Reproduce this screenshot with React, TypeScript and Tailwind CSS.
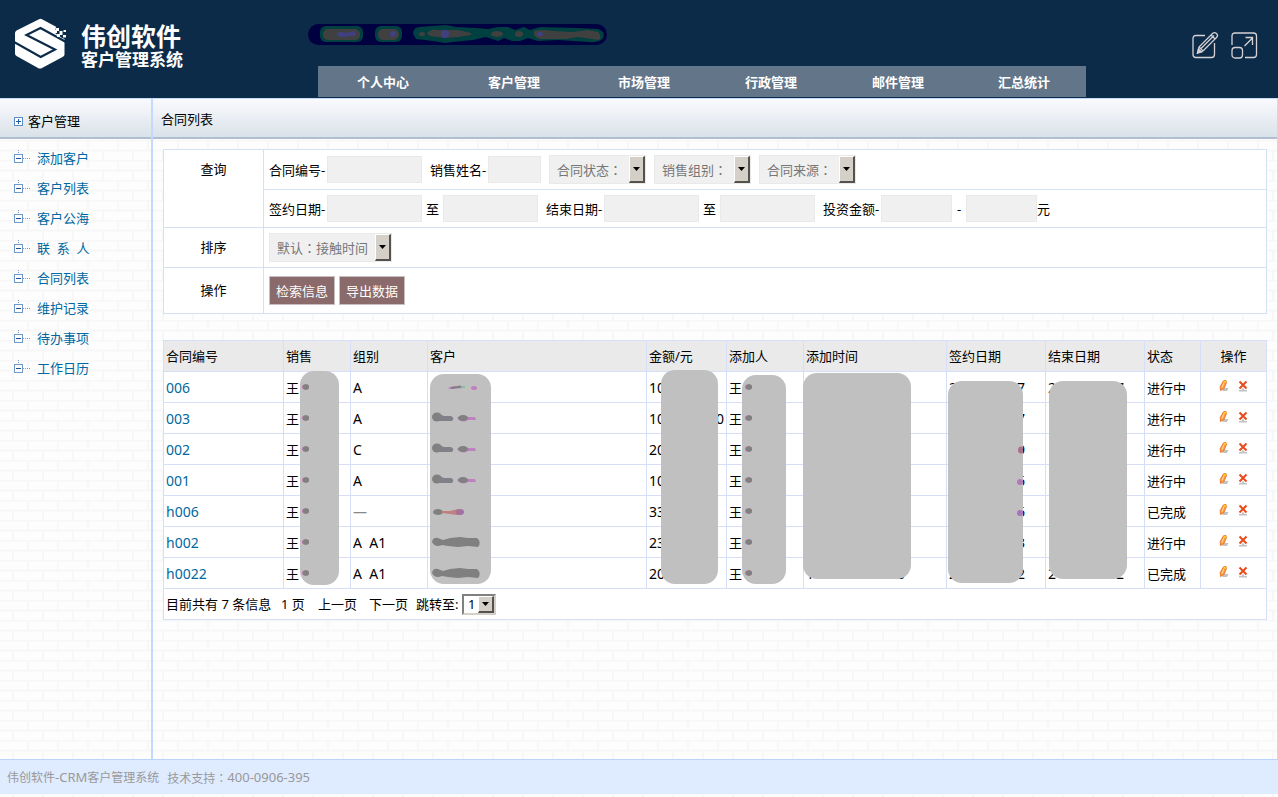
import type { ReactNode } from "react";

const NAV_ITEMS = ["个人中心", "客户管理", "市场管理", "行政管理", "邮件管理", "汇总统计"];

const SIDE_ITEMS = [
  "添加客户",
  "客户列表",
  "客户公海",
  "联  系  人",
  "合同列表",
  "维护记录",
  "待办事项",
  "工作日历",
];

// Masked values only keep their first and last characters
type Masked = [string, string];

interface Contract {
  code: string;
  group: string;
  amount: Masked;
  added: Masked;
  signed: Masked;
  ended: Masked;
  status: string;
}

const CONTRACTS: Contract[] = [
  { code: "006", group: "A", amount: ["10", ""], added: ["", ""], signed: ["2", "7"], ended: ["2", "7"], status: "进行中" },
  { code: "003", group: "A", amount: ["10", "0"], added: ["", ""], signed: ["", "7"], ended: ["", ""], status: "进行中" },
  { code: "002", group: "C", amount: ["20", ""], added: ["", ""], signed: ["", "9"], ended: ["", ""], status: "进行中" },
  { code: "001", group: "A", amount: ["10", ""], added: ["", ""], signed: ["", "6"], ended: ["", ""], status: "进行中" },
  { code: "h006", group: "", amount: ["33", ""], added: ["", ""], signed: ["", "6"], ended: ["", ""], status: "已完成" },
  { code: "h002", group: "A  A1", amount: ["23", ""], added: ["", ""], signed: ["", "3"], ended: ["", ""], status: "进行中" },
  { code: "h0022", group: "A  A1", amount: ["20", ""], added: ["1", "0"], signed: ["2", "2"], ended: ["2", "2"], status: "已完成" },
];

export default function App() {
  return (
    <div className="relative isolate flex min-h-screen flex-col bg-[#fdfdfd] font-['Noto_Sans','Noto_Sans_CJK_SC',sans-serif] text-[13px] leading-5 text-black">
      <BrickBackground />
      <Header />

      <div className="flex flex-1 border-t border-[#c3dafb]">
        <Sidebar />
        <main className="min-w-0 flex-1 border-r border-[#c3dafb]">
          <h1 className="flex h-10 items-center border-b-2 border-[#afbfcf] bg-linear-to-b from-[#fafafe] to-[#dae2e9] px-2 pt-0.5">
            合同列表
          </h1>
          <div className="p-[10px]">
            <SearchForm />
            <ContractTable />
          </div>
        </main>
      </div>

      <footer className="mb-[3px] flex h-[35px] items-center border-t border-[#b9d4fa] bg-[#dfebff] px-[7px] pt-px text-xs text-[#999]">
        <span>伟创软件</span>
        <span className="text-[13px]">-CRM</span>
        <span className="mr-2">客户管理系统</span>
        <span className="font-['Noto_Sans_CJK_TC',sans-serif]">技术支持：</span>
        <span className="text-[13px]">400-0906-395</span>
      </footer>
    </div>
  );
}

function BrickBackground() {
  return (
    <svg className="absolute inset-0 -z-10 h-full w-full" aria-hidden="true">
      <defs>
        <pattern id="bricks" width="30" height="20" patternUnits="userSpaceOnUse">
          <path d="M0 .5H30M0 10.5H30" stroke="#f7f7f7" strokeWidth="2" />
          <path d="M28 0V10M13 10V20" stroke="#f7f7f7" strokeWidth="2" />
        </pattern>
      </defs>
      <rect width="100%" height="100%" fill="url(#bricks)" />
    </svg>
  );
}

function Header() {
  return (
    <header className="flex h-[98px] bg-[#0c2b48] text-white">
      <div className="flex w-[308px] shrink-0 items-start pt-[18px] pl-[14px]">
        <Logo />
        <div className="ml-[14px] pt-px font-['Liberation_Sans','Noto_Sans_CJK_SC',sans-serif] font-bold whitespace-nowrap">
          <div className="text-[25px] leading-9">伟创软件</div>
          <div className="text-[17px] leading-3">客户管理系统</div>
        </div>
      </div>

      <div className="flex flex-1 flex-col justify-between pt-6 pb-px">
        <UserInfo />
        <nav className="ml-[10px] grid h-[31px] w-[768px] grid-cols-[130fr_132fr_128fr_126fr_128fr_124fr] items-center bg-[#627589]">
          {NAV_ITEMS.map((item) => (
            <a key={item} href="#" className="text-center font-bold">
              {item}
            </a>
          ))}
        </nav>
      </div>

      <div className="flex shrink-0 items-start gap-[11px] pt-[31px] pr-5">
        <button type="button" aria-label="编辑">
          <svg width="28" height="28" viewBox="0 0 28 28" fill="none" stroke="#d5d1d5" strokeWidth="1.3">
            <path d="M14 4.500H5Q2 4.500 2 7.500V23.500Q2 26.500 5 26.500H20.500Q23.500 26.500 23.500 23.500V12" />
            <path d="M6.500 22L8 16L21.500 2.500Q23.500 .8 25.500 2.500Q27.500 4.500 25.500 6.500L12 20ZM8 16L12 20M10 17.500L23 4.500M20 4L24 8" />
            <path d="M6.500 22L7.500 18L10.500 21Z" fill="#d5d1d5" />
          </svg>
        </button>
        <button type="button" aria-label="全屏">
          <svg width="28" height="28" viewBox="0 0 28 28" fill="none" stroke="#d5d1d5" strokeWidth="1.3">
            <path d="M2 14V5Q2 2 5 2H23.500Q26.500 2 26.500 5V23.500Q26.500 26.500 23.500 26.500H15" />
            <rect x="2" y="16.500" width="10.500" height="10.500" rx="3" />
            <path d="M14.500 15L22.500 7M15.500 6.500H22.500V14" />
          </svg>
        </button>
      </div>
    </header>
  );
}

function Logo() {
  return (
    <svg width="53" height="52" viewBox="0 0 53 52" aria-hidden="true">
      <path d="M25 1.200Q26.500 .5 28 1.200L49 12.500Q50.500 13.500 50.500 15V36.500Q50.500 38 49 38.800L28 50Q26 51 24 50L2.500 38Q1 37 1 35.500V15Q1 13.500 2.500 12.500Z" fill="#fff" />
      <path d="M0 24L26.700 39L41 31.500L12.500 17L26.500 10L52 24" fill="none" stroke="#0c2b48" strokeWidth="2.200" />
      <path d="M42 9L53 8V22L48 20L41 15Z" fill="#0c2b48" />
      <path d="M42 10h3v3h-3zM45.500 13h3v4h-3zM49.500 12h2.500v2h-2.500zM43 16h3v3h-3zM49 17h3v2.500h-3zM40 12h3v3h-3z" fill="#fff" />
    </svg>
  );
}

function UserInfo() {
  return (
    <svg width="299" height="21" viewBox="0 0 299 21" aria-hidden="true">
      <rect width="299" height="21" rx="10.500" fill="#000040" />
      <g fill="#004040">
        <rect x="12" y="2" width="43" height="16" rx="6" />
        <rect x="67" y="2" width="27" height="16" rx="6" />
        <path d="M105 10Q105 3 112 3L124 2L138 1L148 3L168 4L180 5L190 3H200L207 6L216 3L222 6L232 3L270 4L290 5Q298 8 295 14Q292 19 280 18L250 16L230 17L220 14L212 17H204L196 14L190 17L178 13L165 16L145 18L137 19L125 17L108 15Z" />
      </g>
      <g fill="#404040">
        <rect x="15" y="5" width="37" height="11" rx="5" />
        <rect x="70" y="5" width="21" height="11" rx="5" />
        <ellipse cx="114" cy="10" rx="3" ry="2" />
        <path d="M119 9Q124 4 130 6L150 6L163 9V11L150 13L138 14L122 12Z" />
        <ellipse cx="189" cy="10" rx="6" ry="3" />
        <ellipse cx="211" cy="10" rx="4" ry="3" />
        <path d="M226 7Q235 5 245 7L265 8L280 6L290 8Q294 12 291 16L270 13L258 15L232 15Q224 12 226 7Z" />
      </g>
      <g fill="#404080">
        <path d="M29 10Q31 6 37 9L46 7Q50 10 46 12L34 13Q29 13 29 10Z" />
        <circle cx="85" cy="10" r="3" />
        <circle cx="137" cy="10" r="4" />
        <ellipse cx="232" cy="10" rx="3" ry="2" />
      </g>
    </svg>
  );
}

function Sidebar() {
  return (
    <aside className="w-[153px] shrink-0 border-r-2 border-[#c3dafe]">
      <h2 className="flex h-10 items-center border-b-2 border-[#afbfcf] bg-linear-to-b from-[#fafafe] to-[#dae2e9] pt-[6px] pl-[14px]">
        <svg width="9" height="9" viewBox="0 0 9 9" className="mr-[5px]" aria-hidden="true">
          <rect x=".5" y=".5" width="8" height="8" fill="#fff" stroke="#5b8bc4" />
          <path d="M2 4.500H7M4.500 2V7" stroke="#225b9c" />
        </svg>
        客户管理
      </h2>
      <ul className="pt-1">
        {SIDE_ITEMS.map((item) => (
          <li key={item} className="flex h-[30px] items-center pl-[14px]">
            <svg width="16" height="14" viewBox="0 0 16 14" className="mr-[7px] mb-0.5" aria-hidden="true">
              <path d="M4.500 0V4M9 8.500H16" stroke="#7a9cc4" strokeDasharray="1 1" />
              <rect x=".5" y="4.500" width="8" height="8" fill="#fff" stroke="#6f9ac8" />
              <path d="M2 8.500H7" stroke="#1f4f8c" />
            </svg>
            <a href="#" className="whitespace-pre text-[#0068a0]">
              {item}
            </a>
          </li>
        ))}
      </ul>
    </aside>
  );
}

function SearchForm() {
  return (
    <form className="border border-[#d6e0f5] bg-white">
      <div className="flex border-b border-[#d6e0f5]">
        <RowLabel pad="pt-[9px]">查询</RowLabel>
        <div className="min-w-0 flex-1">
          <div className="flex h-10 items-center gap-2 border-b border-[#d6e0f5] pl-[5px]">
            <Field label="合同编号-" size="w-[95px]" />
            <Field label="销售姓名-" size="w-[53px]" />
            <FilterSelect label="合同状态：" size="w-[97px]" />
            <FilterSelect label="销售组别：" size="w-[97px]" />
            <FilterSelect label="合同来源：" size="w-[97px]" />
          </div>
          <div className="flex h-[37px] items-center gap-2 pl-[5px]">
            <DateRange label="签约日期-" />
            <DateRange label="结束日期-" />
            <div className="flex items-center">
              <Field label="投资金额-" size="w-[71px]" />
              <span className="w-[14px] text-center">-</span>
              <input type="text" aria-label="投资金额上限" className="h-[27px] w-[71px] border border-[#e9e9e9] bg-[#f0f0f0]" />
              元
            </div>
          </div>
        </div>
      </div>
      <div className="flex h-10 border-b border-[#d6e0f5]">
        <RowLabel pad="pt-[9px]">排序</RowLabel>
        <div className="flex items-center pl-[5px]">
          <FilterSelect label="默认：接触时间" size="w-[123px]" />
        </div>
      </div>
      <div className="flex h-[45px]">
        <RowLabel pad="pt-3">操作</RowLabel>
        <div className="flex items-center gap-1 pl-[5px]">
          <ActionButton>检索信息</ActionButton>
          <ActionButton>导出数据</ActionButton>
        </div>
      </div>
    </form>
  );
}

function RowLabel({ pad, children }: { pad: string; children: ReactNode }) {
  return (
    <div className={`w-[100px] shrink-0 border-r border-[#d6e0f5] text-center ${pad}`}>{children}</div>
  );
}

function Field({ label, size }: { label: string; size: string }) {
  return (
    <label className="flex items-center">
      <span className="w-[58px] whitespace-nowrap">{label}</span>
      <input type="text" className={`h-[27px] border border-[#e9e9e9] bg-[#f0f0f0] px-1 ${size}`} />
    </label>
  );
}

function DateRange({ label }: { label: string }) {
  return (
    <div className="flex items-center">
      <Field label={label} size="w-[95px]" />
      <span className="w-[21px] text-center">至</span>
      <input type="text" aria-label={`${label}至`} className="h-[27px] w-[95px] border border-[#e9e9e9] bg-[#f0f0f0] px-1" />
    </div>
  );
}

function FilterSelect({ label, size }: { label: string; size: string }) {
  return (
    <div className={`relative ${size}`}>
      <select
        aria-label={label}
        className="block h-[29px] w-full appearance-none border border-[#e9e9e9] bg-[#f0f0f0] pl-[7px] font-['Noto_Sans_CJK_TC',sans-serif] text-[#777]"
      >
        <option>{label}</option>
      </select>
      <DropArrow className="inset-y-px right-px w-4" />
    </div>
  );
}

function DropArrow({ className }: { className: string }) {
  return (
    <span
      className={`pointer-events-none absolute flex items-center justify-center border-t border-r-2 border-b-2 border-l border-t-white border-r-[#55524e] border-b-[#55524e] border-l-white bg-[#d4d0c8] ${className}`}
    >
      <svg width="7" height="4" viewBox="0 0 7 4">
        <path d="M0 0H7L3.500 4Z" />
      </svg>
    </span>
  );
}

function ActionButton({ children }: { children: ReactNode }) {
  return (
    <button type="button" className="h-[29px] w-[66px] border border-[#c8c0c0] bg-[#8a6a6a] text-white">
      {children}
    </button>
  );
}

function ContractTable() {
  const th = "border border-[#d6dff7] px-[2px] text-left font-normal";
  const td = "border border-[#d6dff7] px-[2px] pt-0.5";

  return (
    <div className="relative mt-[26px]">
      <table className="w-full table-fixed border-collapse bg-white">
        <colgroup>
          <col className="w-[120px]" />
          <col className="w-[67px]" />
          <col className="w-[77px]" />
          <col />
          <col className="w-[80px]" />
          <col className="w-[77px]" />
          <col className="w-[143px]" />
          <col className="w-[99px]" />
          <col className="w-[99px]" />
          <col className="w-[56px]" />
          <col className="w-[66px]" />
        </colgroup>
        <thead>
          <tr className="h-[31px] bg-[#eaeaea]">
            <th className={th}>合同编号</th>
            <th className={th}>销售</th>
            <th className={th}>组别</th>
            <th className={th}>客户</th>
            <th className={th}>金额/元</th>
            <th className={th}>添加人</th>
            <th className={th}>添加时间</th>
            <th className={th}>签约日期</th>
            <th className={th}>结束日期</th>
            <th className={th}>状态</th>
            <th className="border border-[#d6dff7] text-center font-normal">操作</th>
          </tr>
        </thead>
        <tbody>
          {CONTRACTS.map((row) => (
            <tr key={row.code} className="h-[31px]">
              <td className={td}>
                <a href="#" className="text-sm text-[#0068a0]">
                  {row.code}
                </a>
              </td>
              <td className={td}>王</td>
              <td className={`${td} text-sm whitespace-pre`}>
                {row.group || <span className="text-[#888]">—</span>}
              </td>
              <td className={td}></td>
              <td className={td}>
                <MaskedText value={row.amount} size="w-[75px]" />
              </td>
              <td className={td}>王</td>
              <td className={td}>
                <MaskedText value={row.added} size="w-[99px]" />
              </td>
              <td className={td}>
                <MaskedText value={row.signed} size="w-[76px]" />
              </td>
              <td className={td}>
                <MaskedText value={row.ended} size="w-[76px]" />
              </td>
              <td className={td}>{row.status}</td>
              <td className="border border-[#d6dff7]">
                <RowActions />
              </td>
            </tr>
          ))}
        </tbody>
        <tfoot>
          <tr className="h-[31px]">
            <td className="border border-[#d6dff7] px-[2px]" colSpan={11}>
              <div className="flex items-center whitespace-pre">
                <span className="w-[115px]">目前共有 7 条信息</span>
                <span className="w-[37px]">1 页</span>
                <a href="#" className="w-[51px]">上一页</a>
                <a href="#" className="w-[47px]">下一页</a>
                <label htmlFor="page" className="w-[46px]">跳转至:</label>
                <div className="relative w-[34px]">
                  <select
                    id="page"
                    className="block h-[21px] w-full appearance-none border-2 border-t-[#808080] border-r-[#d4d0c8] border-b-[#d4d0c8] border-l-[#808080] bg-white pl-1 leading-4"
                  >
                    <option>1</option>
                  </select>
                  <DropArrow className="inset-y-0.5 right-0.5 w-4" />
                </div>
              </div>
            </td>
          </tr>
        </tfoot>
      </table>
      <Masks />
    </div>
  );
}

function MaskedText({ value, size }: { value: Masked; size: string }) {
  return (
    <span className={`flex justify-between text-sm ${size}`}>
      <span>{value[0]}</span>
      <span>{value[1]}</span>
    </span>
  );
}

function RowActions() {
  return (
    <div className="flex items-center justify-center gap-[9px] pb-0.5">
      <button type="button" aria-label="编辑">
        <svg width="10" height="12" viewBox="0 0 10 12" className="block">
          <path d="M5 8H9.500L8 11H3Z" fill="#c2c2c2" />
          <path d="M4.500 .8L7 .5L7.500 2.500L5 8.500L1.500 10.500L1.200 6.500Z" fill="#ff9a3c" stroke="#e0681c" strokeWidth=".8" />
          <path d="M5 2.500L3 7.500" stroke="#ffe2a0" />
          <path d="M5 .8L7.500 1.500L7 3L4.500 2Z" fill="#ffd21e" />
        </svg>
      </button>
      <button type="button" aria-label="删除">
        <svg width="10" height="12" viewBox="0 0 10 12" className="block">
          <path d="M5 7.500L6.500 10H9V11.500H1V10H3.500Z" fill="#c2c2c2" />
          <path d="M1.500 1.500L8.500 8.500M8.500 1.500L1.500 8.500" stroke="#e84a1c" strokeWidth="2" />
        </svg>
      </button>
    </div>
  );
}

// Grey plates over the private columns
function Masks() {
  const plate = "absolute rounded-[14px] bg-[#c0c0c0]";

  return (
    <div className="pointer-events-none absolute inset-0" aria-hidden="true">
      <div className={`${plate} top-[31px] left-[137px] h-[214px] w-[39px]`}>
        <NameDots className="top-[12px] left-[1px]" />
      </div>
      <div className={`${plate} top-[34px] left-[267px] h-[210px] w-[61px]`}>
        <CustomerSmudges />
      </div>
      <div className={`${plate} top-[30px] right-[549px] h-[214px] w-[57px]`} />
      <div className={`${plate} top-[35px] right-[481px] h-[209px] w-[44px]`}>
        <NameDots className="top-[8px] left-[2px]" />
      </div>
      <div className={`${plate} top-[33px] right-[356px] h-[206px] w-[108px]`} />
      <div className={`${plate} top-[41px] right-[244px] h-[202px] w-[75px]`}>
        <svg width="6" height="150" viewBox="0 0 6 150" className="absolute top-0 right-0">
          <ellipse cx="4" cy="69" rx="3" ry="3.500" fill="#a9718a" />
          <ellipse cx="3" cy="101" rx="3" ry="3" fill="#b07ab8" />
          <ellipse cx="3" cy="132" rx="3" ry="3" fill="#a874c0" />
        </svg>
      </div>
      <div className={`${plate} top-[41px] right-[140px] h-[198px] w-[78px]`} />
    </div>
  );
}

function NameDots({ className }: { className: string }) {
  return (
    <svg width="10" height="196" viewBox="0 0 10 196" className={`absolute ${className}`}>
      {CONTRACTS.map((row, i) => (
        <g key={row.code}>
          <ellipse cx="4.500" cy={4 + i * 31} rx="3.500" ry="2.800" fill="#b878a8" />
          <ellipse cx="5" cy={4 + i * 31} rx="3" ry="2.800" fill="#808080" />
        </g>
      ))}
    </svg>
  );
}

function CustomerSmudges() {
  return (
    <svg width="61" height="210" viewBox="0 0 61 210">
      <path d="M18 14Q22 11 34 13V14L20 15Z" fill="#bf80bf" />
      <path d="M21 14L31 12.500" stroke="#808080" strokeWidth="2" />
      <path d="M31 13H35" stroke="#80c0a0" strokeWidth="2" />
      <ellipse cx="44" cy="14" rx="3" ry="2" fill="#bf80bf" />
      {[44, 75, 106].map((y) => (
        <g key={y}>
          <path d={`M27 ${y}Q32 ${y - 5} 38 ${y - 1}H45L46 ${y + 2}H38Q32 ${y + 6} 27 ${y}Z`} fill="#bf80bf" />
          <ellipse cx="33" cy={y} rx="5" ry="3" fill="#808080" />
          <ellipse cx="7" cy={y - 1} rx="5" ry="4.500" fill="#808080" />
          <path d={`M9 ${y - 4}L14 ${y - 2}L21 ${y - 2}Q25 ${y} 22 ${y + 3}H14L8 ${y + 3}Z`} fill="#808088" />
        </g>
      ))}
      <ellipse cx="8" cy="138" rx="5" ry="3" fill="#808080" />
      <path d="M12 137H20L28 135Q34 136 33 140L27 141L12 139Z" fill="#bf8080" />
      <ellipse cx="30" cy="138" rx="4" ry="3" fill="#a470a0" />
      {[168, 199].map((y) => (
        <path
          key={y}
          d={`M2 ${y}Q3 ${y - 5} 8 ${y - 4}L13 ${y - 2}L20 ${y - 4}L30 ${y - 5}L38 ${y - 4}L47 ${y - 4}Q52 ${y} 48 ${y + 5}L38 ${y + 4}L28 ${y + 5}L18 ${y + 4}L12 ${y + 3}Q5 ${y + 6} 2 ${y}Z`}
          fill="#808080"
        />
      ))}
    </svg>
  );
}
